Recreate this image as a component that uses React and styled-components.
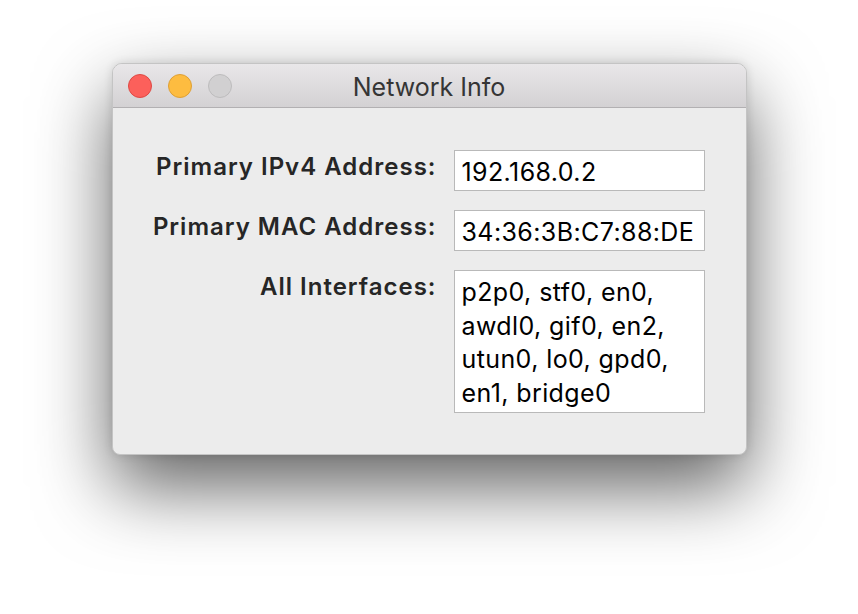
import React from "react";
import styled, { createGlobalStyle } from "styled-components";

const Global = createGlobalStyle`
  html, body { margin: 0; padding: 0; background: #ffffff; }
  body { font-family: Inter, "Liberation Sans", Arial, sans-serif; }
`;

const Page = styled.div`
  width: 858px;
  height: 614px;
  display: flex;
  justify-content: center;
  align-items: flex-start;
  padding-top: 63px;
  box-sizing: border-box;
  overflow: hidden;
`;

const Window = styled.div`
  width: 635px;
  border-radius: 10px 10px 8px 8px;
  background: #ececec;
  border: 1px solid #c4c4c4;
  box-sizing: border-box;
  overflow: hidden;
  box-shadow: 0 32px 75px rgba(0, 0, 0, 0.62), 0 0 10px rgba(0, 0, 0, 0.12);
  display: flex;
  flex-direction: column;
`;

const TitleBar = styled.div`
  height: 43px;
  background: linear-gradient(#e9e7e9, #d3d1d3);
  border-bottom: 1px solid #b2b0b2;
  display: flex;
  align-items: center;
  position: relative;
  padding-left: 15px;
  gap: 16px;
`;

const Light = styled.span`
  width: 24px;
  height: 24px;
  border-radius: 50%;
  box-sizing: border-box;
  background: ${(p) => p.$fill};
  border: 1px solid ${(p) => p.$edge};
`;

const Title = styled.div`
  position: absolute;
  left: 0;
  right: 0;
  top: 8px;
  text-align: center;
  font-size: 25px;
  line-height: 30px;
  color: #353535;
  pointer-events: none;
`;

const Body = styled.div`
  padding: 42px 0 41px 0;
  display: grid;
  grid-template-columns: 323px 251px;
  column-gap: 18px;
  row-gap: 19px;
`;

const Label = styled.div`
  text-align: right;
  font-weight: 600;
  font-size: 24px;
  letter-spacing: 1px;
  margin-right: -1px;
  color: #262626;
  padding-top: 2px;
  line-height: 29px;
  white-space: nowrap;
`;

const Field = styled.div`
  background: #ffffff;
  border: 1px solid #b9b9b9;
  box-sizing: border-box;
  height: ${(p) => p.$h}px;
  padding: 5px 2px 0 7px;
  font-size: 25px;
  letter-spacing: 0.4px;
  line-height: 33.5px;
  color: #000;
  white-space: nowrap;
  overflow: hidden;
`;

const interfaces = [
  "p2p0, stf0, en0,",
  "awdl0, gif0, en2,",
  "utun0, lo0, gpd0,",
  "en1, bridge0",
];

export default function App() {
  return (
    <>
      <Global />
      <Page>
        <Window>
          <TitleBar>
            <Light $fill="#fc605b" $edge="#de4944" />
            <Light $fill="#fdbc40" $edge="#dea035" />
            <Light $fill="#d1d0d1" $edge="#bdbcbd" />
            <Title>Network Info</Title>
          </TitleBar>
          <Body>
            <Label>Primary IPv4 Address:</Label>
            <Field $h={41}>192.168.0.2</Field>
            <Label>Primary MAC Address:</Label>
            <Field $h={41}>34:36:3B:C7:88:DE</Field>
            <Label>All Interfaces:</Label>
            <Field $h={143}>
              {interfaces.map((line, i) => (
                <React.Fragment key={i}>
                  {line}
                  {i < interfaces.length - 1 && <br />}
                </React.Fragment>
              ))}
            </Field>
          </Body>
        </Window>
      </Page>
    </>
  );
}
